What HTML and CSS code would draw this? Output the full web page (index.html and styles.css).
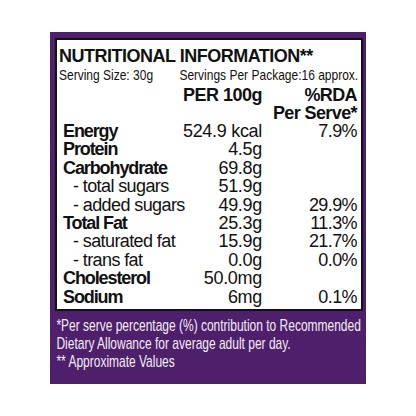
FILE: index.html
```html
<!DOCTYPE html>
<html lang="en">
<head>
    <meta charset="UTF-8">
    <title>Nutritional Information</title>
    <link rel="stylesheet" href="styles.css">
</head>
<body>
    <div class="panel">
        <div class="facts">
            <div class="title">NUTRITIONAL INFORMATION**</div>
            <div class="serving">
                <span>Serving Size: 30g</span>
                <span>Servings Per Package:16 approx.</span>
            </div>
            <div class="grid">
                <div class="head"></div>
                <div class="head val">PER 100g</div>
                <div class="head rda">%RDA<br>Per Serve*</div>

                <div class="name">Energy</div><div class="val">524.9 kcal</div><div class="rda">7.9%</div>
                <div class="name">Protein</div><div class="val">4.5g</div><div class="rda"></div>
                <div class="name">Carbohydrate</div><div class="val">69.8g</div><div class="rda"></div>
                <div class="sub">- total sugars</div><div class="val">51.9g</div><div class="rda"></div>
                <div class="sub">- added sugars</div><div class="val">49.9g</div><div class="rda">29.9%</div>
                <div class="name">Total Fat</div><div class="val">25.3g</div><div class="rda">11.3%</div>
                <div class="sub">- saturated fat</div><div class="val">15.9g</div><div class="rda">21.7%</div>
                <div class="sub">- trans fat</div><div class="val">0.0g</div><div class="rda">0.0%</div>
                <div class="name">Cholesterol</div><div class="val">50.0mg</div><div class="rda"></div>
                <div class="name">Sodium</div><div class="val">6mg</div><div class="rda">0.1%</div>
            </div>
        </div>
        <div class="note">
            *Per serve percentage (%) contribution to Recommended<br>
            Dietary Allowance for average adult per day.<br>
            ** Approximate Values
        </div>
    </div>
</body>
</html>
```

FILE: styles.css
```css
body {
    margin: 0;
    background: #fff;
    font-family: 'Liberation Sans', Arial, sans-serif;
    color: #111;
}
.panel {
    margin: 32px 50px;
    width: 316px;
    height: 352px;
    box-sizing: border-box;
    padding: 6px 3px 0 5px;
    background: #4e1f6b;
    overflow: hidden;
}
.facts {
    background: #fff;
    border: 2px solid #111;
    height: 273px;
    box-sizing: border-box;
    padding: 6px 4px 0 2px;
}
.title {
    font-weight: bold;
    font-size: 18px;
    line-height: 20px;
    letter-spacing: -0.5px;
}
.serving {
    display: flex;
    justify-content: space-between;
    width: 374px;
    font-size: 15px;
    line-height: 18px;
    transform: scaleX(0.8);
    transform-origin: left;
}
.grid {
    display: grid;
    grid-template-columns: minmax(0, 1fr) 84px 95px;
    font-size: 18px;
    line-height: 18.4px;
    letter-spacing: -0.3px;
    white-space: nowrap;
}
.head {
    font-weight: bold;
    line-height: 18px;
    margin-top: 2px;
    letter-spacing: -0.5px;
}
.name {
    font-weight: bold;
    padding-left: 4px;
    letter-spacing: -1.1px;
}
.sub {
    padding-left: 14px;
    letter-spacing: -0.6px;
}
.val, .rda {
    text-align: right;
}
.rda {
    letter-spacing: -0.6px;
}
.note {
    width: 430px;
    color: #f3eef7;
    font-size: 17px;
    line-height: 18px;
    padding: 6px 0 0 2px;
    white-space: nowrap;
    transform: scaleX(0.705);
    transform-origin: left;
}
```
